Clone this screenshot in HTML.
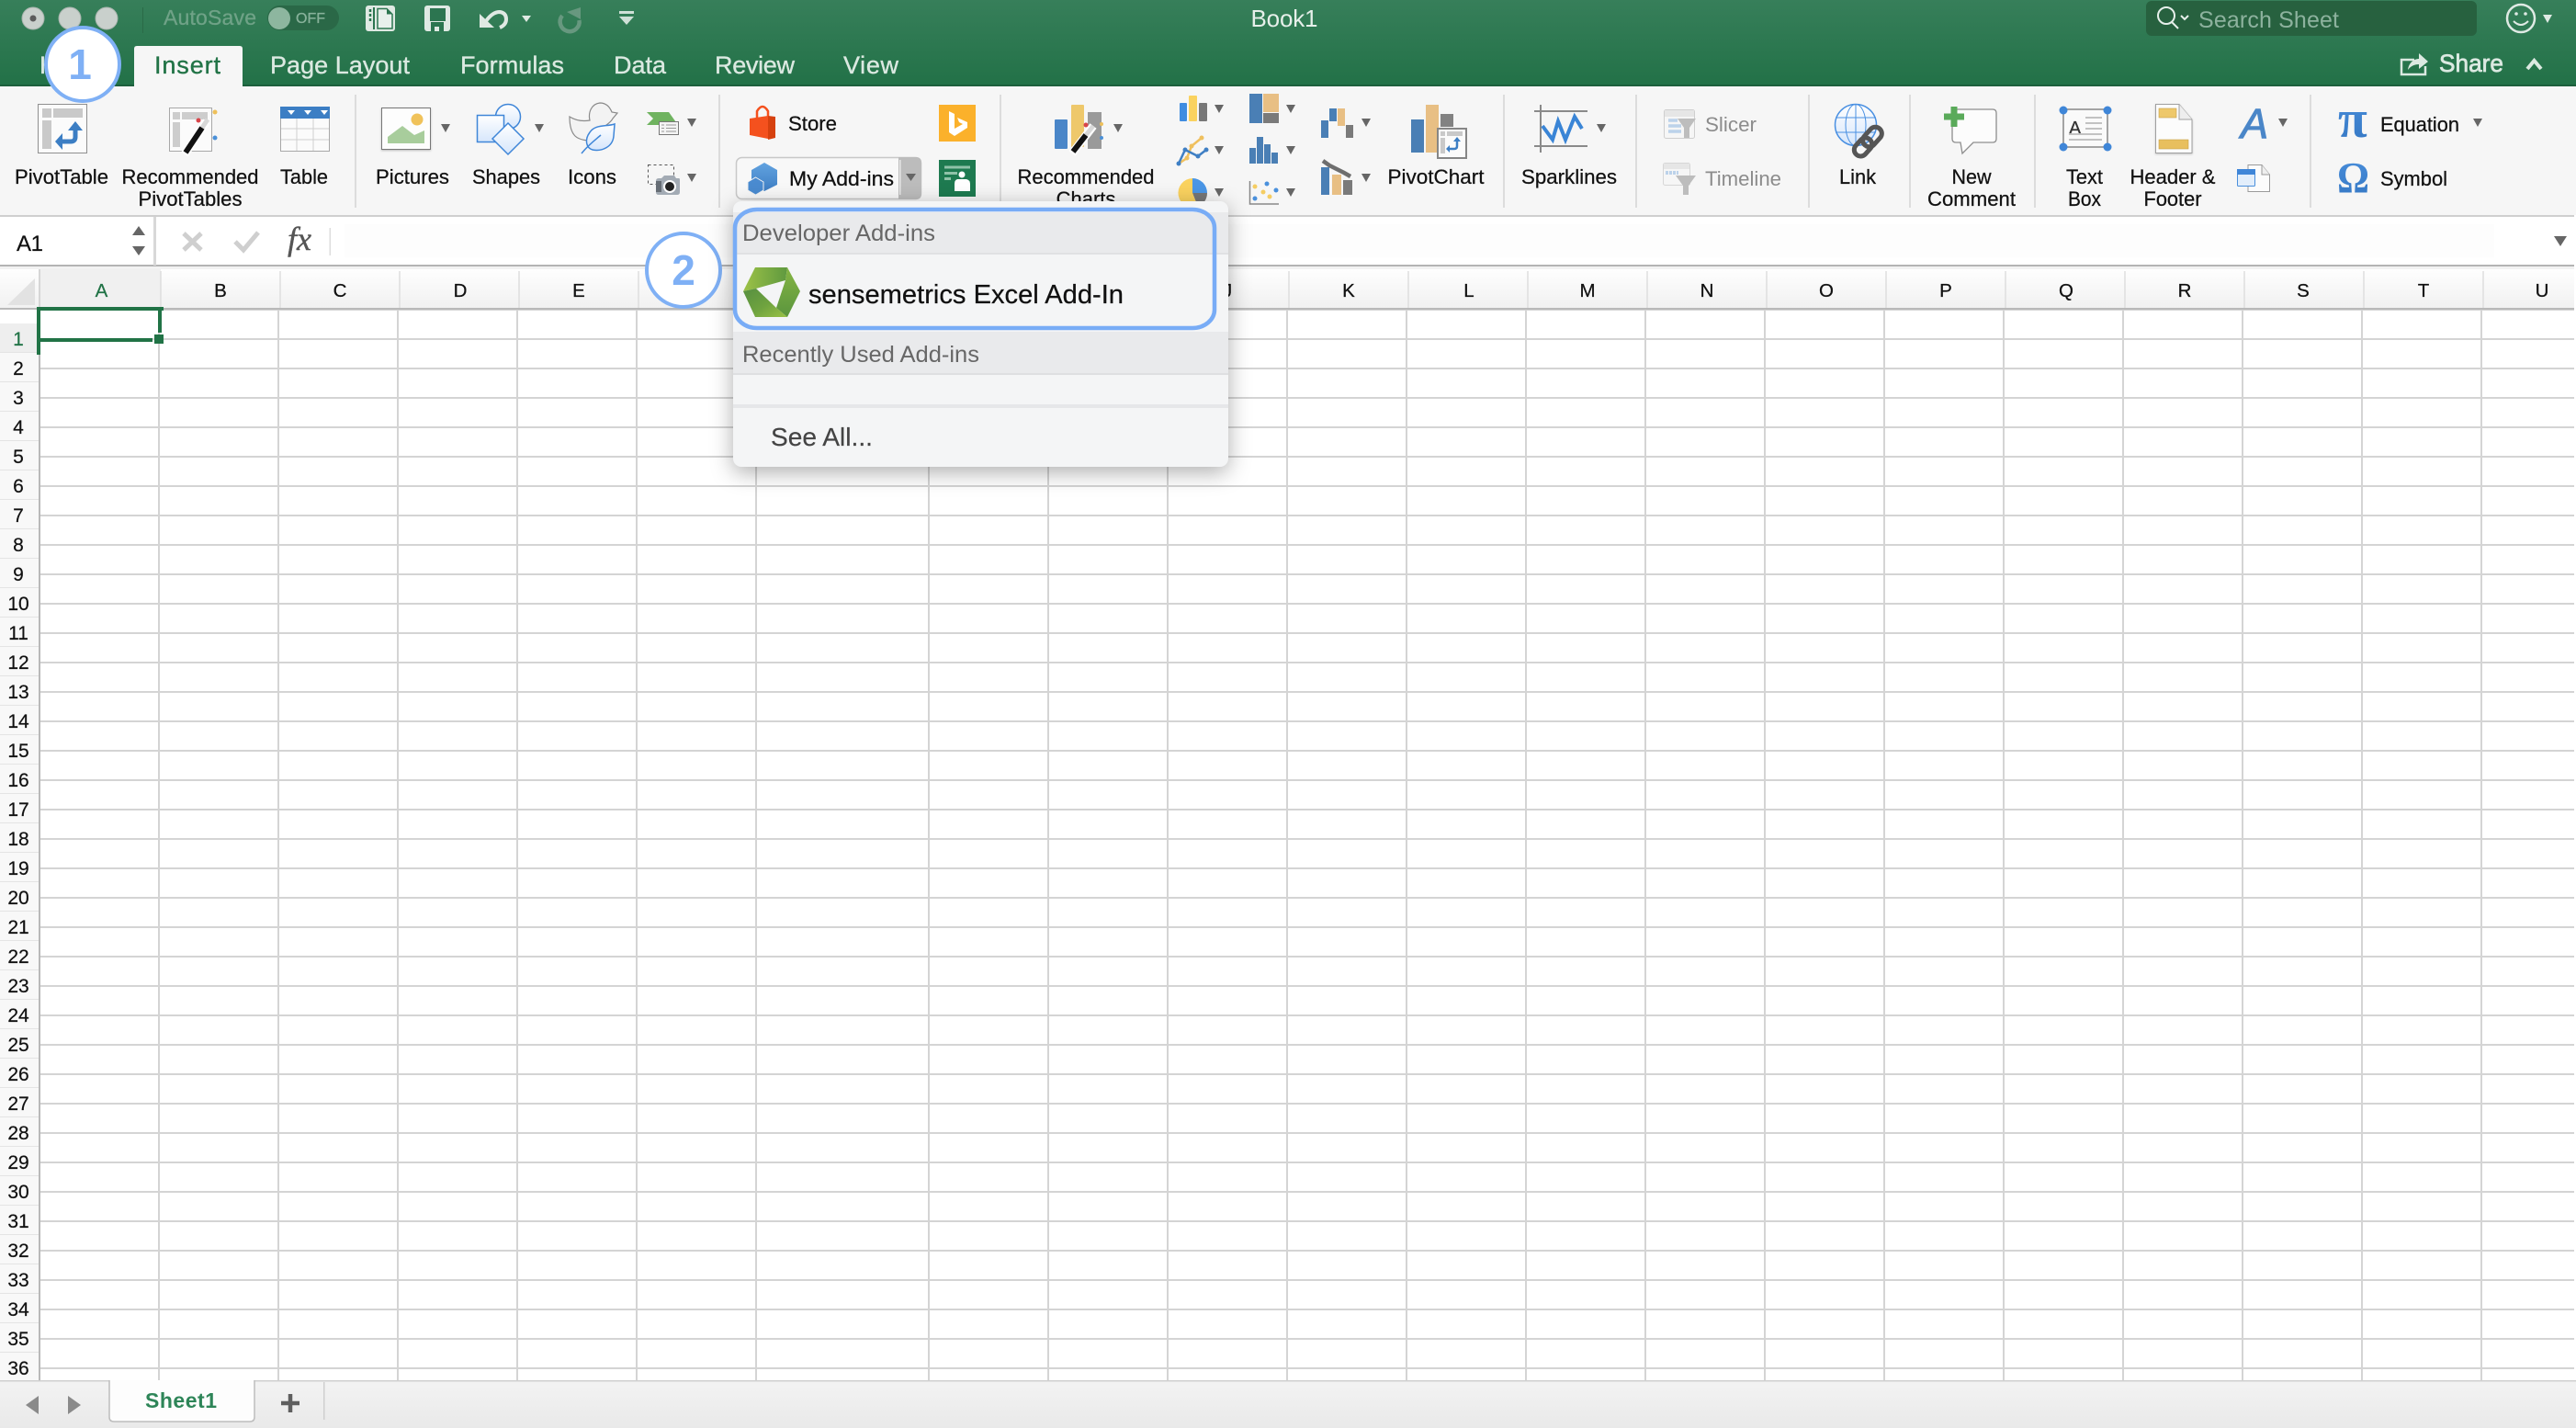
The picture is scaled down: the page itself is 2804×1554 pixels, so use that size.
<!DOCTYPE html>
<html lang="en"><head><meta charset="utf-8"><title>Book1 - Excel</title>
<style>
html,body{margin:0;padding:0;background:#fff;width:2804px;height:1554px;overflow:hidden}
svg{display:block;position:absolute;left:0;top:0}
text{font-family:"Liberation Sans",sans-serif}
.l{font-size:22px;fill:#111;stroke:#111;stroke-width:.25;text-anchor:middle}
.s{font-size:22px;fill:#111;stroke:#111;stroke-width:.25}
.t{font-size:27px;fill:#dbe9e1;stroke:#dbe9e1;stroke-width:.35}
.c{font-size:20.5px;fill:#111;stroke:#111;stroke-width:.25;text-anchor:middle}
.r{font-size:21px;fill:#111;stroke:#111;stroke-width:.2;text-anchor:middle}
.g{font-size:22px;fill:#8c8c8c}
.h{font-size:25.4px;fill:#676767}
</style></head><body>
<svg width="2804" height="1554" viewBox="0 0 2804 1554" xmlns="http://www.w3.org/2000/svg">
<defs>
<linearGradient id="top" x1="0" y1="0" x2="0" y2="1"><stop offset="0" stop-color="#377f5a"/><stop offset="1" stop-color="#227147"/></linearGradient>
<linearGradient id="hd" x1="0" y1="0" x2="0" y2="1"><stop offset="0" stop-color="#fefefe"/><stop offset="1" stop-color="#f1f1f1"/></linearGradient>
<linearGradient id="bb" x1="0" y1="0" x2="0" y2="1"><stop offset="0" stop-color="#f3f3f3"/><stop offset="1" stop-color="#e9e9e9"/></linearGradient>
<linearGradient id="bl" x1="0" y1="0" x2="0" y2="1"><stop offset="0" stop-color="#fff"/><stop offset="1" stop-color="#d6e6fb"/></linearGradient>
<linearGradient id="pi" x1="0" y1="0" x2="0" y2="1"><stop offset="0" stop-color="#4a8fdc"/><stop offset="1" stop-color="#3476c2"/></linearGradient>
<linearGradient id="hex" x1="0" y1="0" x2="0" y2="1"><stop offset="0" stop-color="#62a3e0"/><stop offset="1" stop-color="#3f7fc4"/></linearGradient>
<linearGradient id="lt" x1="0" y1="0" x2="1" y2="0"><stop offset="0" stop-color="#9dc247"/><stop offset="1" stop-color="#5f993f"/></linearGradient>
<linearGradient id="lb" x1="0" y1="0" x2="1" y2="1"><stop offset="0" stop-color="#568f40"/><stop offset=".55" stop-color="#6fa33f"/><stop offset="1" stop-color="#9ac246"/></linearGradient>
<linearGradient id="lr" x1="0" y1="0" x2="0" y2="1"><stop offset="0" stop-color="#86b543"/><stop offset="1" stop-color="#5a953e"/></linearGradient>
<pattern id="rows" patternUnits="userSpaceOnUse" x="0" y="368" width="32" height="32"><rect width="32" height="2" fill="#d4d4d4"/></pattern>
<path id="a" d="M-5-4H5L0 5Z" fill="#666"/>
</defs>

<!-- sheet grid -->
<rect x="0" y="0" width="2804" height="1554" fill="#fff"/>
<rect x="44" y="337" width="2760" height="1165" fill="url(#rows)"/>
<path d="M173 337V1502M303 337V1502M433 337V1502M563 337V1502M693 337V1502M823 337V1502M1011 337V1502M1141 337V1502M1271 337V1502M1401 337V1502M1531 337V1502M1661 337V1502M1791 337V1502M1921 337V1502M2051 337V1502M2181 337V1502M2311 337V1502M2441 337V1502M2571 337V1502M2701 337V1502" stroke="#d4d4d4" stroke-width="2" fill="none"/>

<!-- row header -->
<rect x="0" y="337" width="42" height="1165" fill="#f8f8f8"/>
<rect x="0" y="337" width="42" height="15" fill="#fff"/>
<rect x="0" y="352" width="42" height="31" fill="#eeeeee"/>
<rect x="42" y="337" width="2" height="1165" fill="#b9b9b9"/>
<g fill="#e4e4e4">
<rect y="383" width="42" height="1"/><rect y="415" width="42" height="1"/><rect y="447" width="42" height="1"/><rect y="479" width="42" height="1"/><rect y="511" width="42" height="1"/><rect y="543" width="42" height="1"/><rect y="575" width="42" height="1"/><rect y="607" width="42" height="1"/><rect y="639" width="42" height="1"/><rect y="671" width="42" height="1"/><rect y="703" width="42" height="1"/><rect y="735" width="42" height="1"/><rect y="767" width="42" height="1"/><rect y="799" width="42" height="1"/><rect y="831" width="42" height="1"/><rect y="863" width="42" height="1"/><rect y="895" width="42" height="1"/><rect y="927" width="42" height="1"/><rect y="959" width="42" height="1"/><rect y="991" width="42" height="1"/><rect y="1023" width="42" height="1"/><rect y="1055" width="42" height="1"/><rect y="1087" width="42" height="1"/><rect y="1119" width="42" height="1"/><rect y="1151" width="42" height="1"/><rect y="1183" width="42" height="1"/><rect y="1215" width="42" height="1"/><rect y="1247" width="42" height="1"/><rect y="1279" width="42" height="1"/><rect y="1311" width="42" height="1"/><rect y="1343" width="42" height="1"/><rect y="1375" width="42" height="1"/><rect y="1407" width="42" height="1"/><rect y="1439" width="42" height="1"/><rect y="1471" width="42" height="1"/>
</g>
<text class="r" x="20" y="376" style="fill:#217346;stroke:#217346">1</text><text class="r" x="20" y="408">2</text><text class="r" x="20" y="440">3</text><text class="r" x="20" y="472">4</text><text class="r" x="20" y="504">5</text><text class="r" x="20" y="536">6</text><text class="r" x="20" y="568">7</text><text class="r" x="20" y="600">8</text><text class="r" x="20" y="632">9</text><text class="r" x="20" y="664">10</text><text class="r" x="20" y="696">11</text><text class="r" x="20" y="728">12</text><text class="r" x="20" y="760">13</text><text class="r" x="20" y="792">14</text><text class="r" x="20" y="824">15</text><text class="r" x="20" y="856">16</text><text class="r" x="20" y="888">17</text><text class="r" x="20" y="920">18</text><text class="r" x="20" y="952">19</text><text class="r" x="20" y="984">20</text><text class="r" x="20" y="1016">21</text><text class="r" x="20" y="1048">22</text><text class="r" x="20" y="1080">23</text><text class="r" x="20" y="1112">24</text><text class="r" x="20" y="1144">25</text><text class="r" x="20" y="1176">26</text><text class="r" x="20" y="1208">27</text><text class="r" x="20" y="1240">28</text><text class="r" x="20" y="1272">29</text><text class="r" x="20" y="1304">30</text><text class="r" x="20" y="1336">31</text><text class="r" x="20" y="1368">32</text><text class="r" x="20" y="1400">33</text><text class="r" x="20" y="1432">34</text><text class="r" x="20" y="1464">35</text><text class="r" x="20" y="1496">36</text>

<!-- column header -->
<rect x="0" y="293" width="2804" height="42" fill="url(#hd)"/>
<rect x="44" y="293" width="131" height="42" fill="#f0f0f0"/>
<rect x="0" y="335" width="2804" height="2" fill="#b9b9b9"/>
<path d="M38 303V332H8Z" fill="#e2e2e2"/>
<rect x="42" y="293" width="2" height="42" fill="#d6d6d6"/>
<path d="M175 295V335M305 295V335M435 295V335M565 295V335M695 295V335M825 295V335M1013 295V335M1143 295V335M1273 295V335M1403 295V335M1533 295V335M1663 295V335M1793 295V335M1923 295V335M2053 295V335M2183 295V335M2313 295V335M2443 295V335M2573 295V335M2703 295V335" stroke="#dedede" stroke-width="1.5" fill="none"/>
<text class="c" x="110.500" y="323" style="fill:#217346;stroke:#217346">A</text><text class="c" x="240" y="323">B</text><text class="c" x="370" y="323">C</text><text class="c" x="501" y="323">D</text><text class="c" x="630" y="323">E</text><text class="c" x="757" y="323">F</text><text class="c" x="917" y="323">G</text><text class="c" x="1076" y="323">H</text><text class="c" x="1206" y="323">I</text><text class="c" x="1336" y="323">J</text><text class="c" x="1468" y="323">K</text><text class="c" x="1599" y="323">L</text><text class="c" x="1728" y="323">M</text><text class="c" x="1858" y="323">N</text><text class="c" x="1988" y="323">O</text><text class="c" x="2118" y="323">P</text><text class="c" x="2249" y="323">Q</text><text class="c" x="2378" y="323">R</text><text class="c" x="2507" y="323">S</text><text class="c" x="2638" y="323">T</text><text class="c" x="2767" y="323">U</text>

<!-- selection -->
<g fill="#217346">
<rect x="44" y="334" width="134" height="4"/><rect x="40" y="334" width="4" height="52"/><rect x="172" y="336" width="4" height="26"/><rect x="44" y="368" width="122" height="4"/><rect x="168" y="364" width="10" height="10"/>
</g>

<!-- formula bar -->
<rect x="0" y="236" width="2804" height="53" fill="#fff"/>
<rect x="375" y="244" width="2340" height="36" fill="#fdfdfd"/>
<rect x="0" y="234" width="2804" height="2" fill="#cfcfcf"/>
<rect x="0" y="288" width="2804" height="2" fill="#b4b4b4"/>
<rect x="0" y="290" width="2804" height="3" fill="#f2f2f2"/>
<rect x="167" y="236" width="3" height="53" fill="#d8d8d8"/>
<text x="18" y="273" textLength="29" style="font-size:24px;fill:#111;stroke:#111;stroke-width:.25">A1</text>
<path d="M151 246L158 256H144ZM151 278L144 268H158Z" fill="#666"/>
<path d="M200 254L219 272M219 254L200 272" stroke="#cfcfcf" stroke-width="5" fill="none"/>
<path d="M256 263L265 272L281 253" stroke="#cfcfcf" stroke-width="5" fill="none"/>
<text x="313" y="272" style="font-family:'Liberation Serif',serif;font-style:italic;font-size:36px;fill:#555;stroke:#555;stroke-width:.4">fx</text>
<rect x="358.500" y="248" width="1.500" height="30" fill="#ddd"/>
<path d="M2780 257H2794L2787 268Z" fill="#666"/>
<rect x="2802" y="0" width="2" height="1554" fill="#fff"/>

<!-- bottom bar -->
<rect x="0" y="1502" width="2804" height="52" fill="url(#bb)"/>
<rect x="0" y="1502" width="119" height="1.500" fill="#cfcfcf"/><rect x="277" y="1502" width="2527" height="1.500" fill="#cfcfcf"/>
<path d="M42 1519V1539L28 1529ZM74 1519V1539L88 1529Z" fill="#8a8a8a"/>
<path d="M119 1502V1542Q119 1547 124 1547H272Q277 1547 277 1542V1502" fill="#fdfdfd" stroke="#bdbdbd" stroke-width="1.500"/>
<text x="197" y="1532" text-anchor="middle" textLength="78" style="font-size:23px;font-weight:bold;fill:#2e8558">Sheet1</text>
<path d="M316 1517V1537M306 1527H326" stroke="#5f5f5f" stroke-width="4.500" fill="none"/>
<rect x="352" y="1504" width="1.500" height="41" fill="#cfcfcf"/>

<!-- ribbon -->
<rect x="0" y="94" width="2804" height="140" fill="#f6f6f6"/>
<path d="M387 103V226M783 103V226M1089 103V226M1637 103V226M1781 103V226M1969 103V226M2079 103V226M2215 103V226M2515 103V226" stroke="#dcdcdc" stroke-width="2" fill="none"/>

<!-- title bar -->
<rect x="0" y="0" width="2804" height="94" fill="url(#top)"/>
<rect x="0" y="92" width="2804" height="2" fill="#1d5f3c"/>
<circle cx="36" cy="20" r="12" fill="#c9d0cc" stroke="#a9b4ae"/><circle cx="36" cy="20" r="3.500" fill="#5c5c5c"/>
<circle cx="76" cy="20" r="12" fill="#c9d0cc" stroke="#a9b4ae"/><circle cx="116" cy="20" r="12" fill="#c9d0cc" stroke="#a9b4ae"/>
<rect x="155" y="8" width="1" height="28" fill="#2a6a47"/>
<text x="178" y="27" textLength="101" style="font-size:23px;fill:#6fa287;stroke:#6fa287;stroke-width:.3">AutoSave</text>
<rect x="291" y="6" width="78" height="27" rx="13.500" fill="#2a6847"/>
<circle cx="304" cy="20" r="12" fill="#8db69f"/>
<text x="322" y="25" textLength="32" lengthAdjust="spacingAndGlyphs" style="font-size:16px;fill:#88b29b;stroke:#88b29b;stroke-width:.3">OFF</text>
<!-- sidebar/new -->
<rect x="398" y="6" width="32" height="28" rx="3" fill="#dfe9e3"/>
<rect x="406" y="8" width="2" height="24" fill="#2c7550"/>
<path d="M403 10V13M403 15V18M403 20V23" stroke="#2c7550" stroke-width="2.500"/>
<path d="M411 9.500H421L427 15.500V31H411Z" fill="#e8f0ec" stroke="#2c7550" stroke-width="1.500"/><path d="M421 9.500V15.500H427" fill="#2c7550"/>
<!-- save -->
<rect x="462" y="6" width="28" height="28" rx="3" fill="#dfe9e3"/><rect x="468" y="9" width="17" height="14" fill="#2c7550"/><path d="M469 34V24H483V34H478V29H473V34Z" fill="#2c7550"/>
<!-- undo -->
<path d="M522 15V30H538Z" fill="#dfe9e3"/><path d="M529 23Q536 13 544 13Q551 14 551 21Q551 27 544 30" stroke="#dfe9e3" stroke-width="4" fill="none"/>
<path d="M568 17H578L573 24Z" fill="#dfe9e3"/>
<!-- redo -->
<path d="M612 17A10.500 10.500 0 1 0 630.500 22" stroke="#67987f" stroke-width="4.500" fill="none"/><path d="M617 13L632 8V21Z" fill="#67987f"/>
<!-- customize -->
<rect x="674" y="12" width="16" height="3" fill="#cfe0d7"/><path d="M674 18H690L682 27Z" fill="#cfe0d7"/>
<text x="1398" y="29" text-anchor="middle" textLength="73" style="font-size:26px;fill:#e6efea">Book1</text>
<!-- search -->
<rect x="2336" y="1" width="360" height="38" rx="6" fill="#27613f"/>
<circle cx="2358" cy="17" r="9" fill="none" stroke="#e6efea" stroke-width="2"/><path d="M2364 24L2371 31M2374 17L2378 21L2382 17" stroke="#e6efea" stroke-width="2" fill="none"/>
<text x="2393" y="30" textLength="153" style="font-size:25px;fill:#8db29e">Search Sheet</text>
<circle cx="2744" cy="20" r="15" fill="none" stroke="#dfeae4" stroke-width="2.500"/><circle cx="2739" cy="15" r="1.800" fill="#dfeae4"/><circle cx="2749" cy="15" r="1.800" fill="#dfeae4"/><path d="M2736 23Q2744 31 2752 23" fill="none" stroke="#dfeae4" stroke-width="2"/>
<path d="M2768 16H2778L2773 25Z" fill="#dfeae4"/>

<!-- tabs -->
<text class="t" x="43" y="80">H</text>
<path d="M146 94V53Q146 50 149 50H261Q264 50 264 53V94Z" fill="#f6f6f6"/>
<text x="168" y="80" style="font-size:27px;fill:#217346;stroke:#217346;stroke-width:.35" textLength="72">Insert</text>
<text class="t" x="294" y="80" textLength="152">Page Layout</text><text class="t" x="501" y="80" textLength="113">Formulas</text><text class="t" x="668" y="80" textLength="57">Data</text><text class="t" x="778" y="80" textLength="87">Review</text><text class="t" x="918" y="80" textLength="60">View</text>
<path d="M2628 65H2614V81H2640V72" fill="none" stroke="#dbe9e1" stroke-width="2.500"/><path d="M2621 76C2622 68 2628 64 2633 64V58L2643 67L2633 75V70C2628 70 2624 72 2621 76Z" fill="#dbe9e1"/>
<text x="2655" y="78" style="font-size:27px;fill:#dbe9e1;stroke:#dbe9e1;stroke-width:.7" textLength="70" lengthAdjust="spacingAndGlyphs">Share</text>
<path d="M2751 75L2758.500 66L2766 75" fill="none" stroke="#dbe9e1" stroke-width="4"/>

<!-- ribbon labels -->
<text class="l" x="67" y="200" textLength="102" lengthAdjust="spacingAndGlyphs">PivotTable</text>
<text class="l" x="207" y="200" textLength="149" lengthAdjust="spacingAndGlyphs">Recommended</text><text class="l" x="207" y="224" textLength="113" lengthAdjust="spacingAndGlyphs">PivotTables</text>
<text class="l" x="331" y="200" textLength="52" lengthAdjust="spacingAndGlyphs">Table</text><text class="l" x="449" y="200" textLength="80" lengthAdjust="spacingAndGlyphs">Pictures</text><text class="l" x="551" y="200" textLength="74" lengthAdjust="spacingAndGlyphs">Shapes</text><text class="l" x="644.500" y="200" textLength="53" lengthAdjust="spacingAndGlyphs">Icons</text>
<text class="l" x="1182" y="200" textLength="149" lengthAdjust="spacingAndGlyphs">Recommended</text><text class="l" x="1182" y="224">Charts</text>
<text class="l" x="1563" y="200" textLength="105" lengthAdjust="spacingAndGlyphs">PivotChart</text><text class="l" x="1708" y="200" textLength="104" lengthAdjust="spacingAndGlyphs">Sparklines</text>
<text class="g" x="1856" y="143" textLength="56" lengthAdjust="spacingAndGlyphs">Slicer</text><text class="g" x="1856" y="202" textLength="83" lengthAdjust="spacingAndGlyphs">Timeline</text>
<text class="l" x="2022" y="200" textLength="40" lengthAdjust="spacingAndGlyphs">Link</text>
<text class="l" x="2146" y="200" textLength="43" lengthAdjust="spacingAndGlyphs">New</text><text class="l" x="2146" y="224" textLength="96" lengthAdjust="spacingAndGlyphs">Comment</text>
<text class="l" x="2269" y="200" textLength="40" lengthAdjust="spacingAndGlyphs">Text</text><text class="l" x="2269" y="224" textLength="36" lengthAdjust="spacingAndGlyphs">Box</text>
<text class="l" x="2365" y="200" textLength="93" lengthAdjust="spacingAndGlyphs">Header &amp;</text><text class="l" x="2365" y="224" textLength="63" lengthAdjust="spacingAndGlyphs">Footer</text>
<text class="s" x="858" y="142" textLength="53" lengthAdjust="spacingAndGlyphs">Store</text>
<text class="s" x="2591" y="143" textLength="86" lengthAdjust="spacingAndGlyphs">Equation</text><text class="s" x="2591" y="202" textLength="73" lengthAdjust="spacingAndGlyphs">Symbol</text>

<!-- PivotTable icon -->
<rect x="41.500" y="113.500" width="53" height="53" fill="#fbfbfb" stroke="#8f8f8f"/>
<path d="M46 118H56V128H46ZM58 118H90V128H58ZM46 131H56V162H46Z" fill="#c9c9c9"/>
<path d="M82 142V149Q82 154 77 154H66" fill="none" stroke="#3c7ec4" stroke-width="5"/><path d="M74 142H90L82 132ZM68 145V163L60 154Z" fill="#3c7ec4"/>
<!-- Recommended PivotTables -->
<rect x="184.500" y="117.500" width="46" height="47" fill="#fbfbfb" stroke="#a8a8a8"/>
<path d="M188 122H196V130H188ZM198 122H226V130H198ZM188 133H196V160H188Z" fill="#cdcdcd"/>
<path d="M201 168L225 132" stroke="#fff" stroke-width="9"/><path d="M202 166L220 139" stroke="#111" stroke-width="6"/><path d="M220 139L226 130" stroke="#d8d8d8" stroke-width="5"/>
<circle cx="216" cy="131" r="2.500" fill="#d8454a"/><circle cx="234" cy="122" r="2.500" fill="#eec05a"/><circle cx="234" cy="150" r="2.500" fill="#4a90d8"/>
<!-- Table -->
<rect x="305.500" y="116.500" width="53" height="48" fill="#fbfbfb" stroke="#a8a8a8"/>
<path d="M323 128V164M341 128V164M306 140H358M306 152H358" stroke="#cfcfcf" fill="none"/>
<rect x="305" y="116" width="54" height="13" fill="#3c7ec4"/><path d="M313 120H321L317 125ZM331 120H339L335 125ZM349 120H357L353 125Z" fill="#fff"/>
<!-- Pictures -->
<rect x="415.500" y="117.500" width="53" height="45" fill="#fdfdfd" stroke="#777" style="filter:drop-shadow(0 1px 1px rgba(0,0,0,.25))"/>
<path d="M422 156V149L438 137L451 147L462 142V156Z" fill="#a8cd9c"/><circle cx="454" cy="130" r="6.500" fill="#f0c25a"/>
<use href="#a" x="485" y="139"/>
<!-- Shapes -->
<circle cx="553" cy="127" r="13.500" fill="url(#bl)" stroke="#3f86d8" stroke-width="1.500"/>
<rect x="519.500" y="125.500" width="29" height="29" fill="url(#bl)" stroke="#3f86d8" stroke-width="1.500"/>
<path d="M553 134L570 151L553 168L536 151Z" fill="url(#bl)" stroke="#3f86d8" stroke-width="1.500"/>
<use href="#a" x="587" y="139"/>
<!-- Icons duck & leaf -->
<path d="M620 127C628 132 636 132 642 131C640 122 644 113 653 112C660 112 664 117 666 122L672 123L667 129C664 135 656 137 655 142L650 153C640 154 630 152 626 148C621 143 620 135 620 127Z" fill="#f3f3f3" stroke="#8a8a8a" stroke-width="1.200"/>
<path d="M669 135C660 138 648 135 642 144C636 152 638 161 645 163C655 165 667 160 668 148Z" fill="url(#bl)" stroke="#3f86d8" stroke-width="1.500"/>
<path d="M633 167C640 158 647 153 654 147" stroke="#3f86d8" stroke-width="1.500" fill="none"/>
<!-- Store add-in flag -->
<path d="M704 122H728L738 136H704L711 129Z" fill="#6fb35f"/>
<rect x="717.500" y="132.500" width="21" height="14" fill="#f4f4f4" stroke="#777"/><path d="M720 136H723M725 136H736M720 139.500H723M725 139.500H736M720 143H723M725 143H736" stroke="#999"/>
<use href="#a" x="753" y="133"/>
<!-- camera -->
<rect x="705.500" y="179.500" width="28" height="21" fill="none" stroke="#555" stroke-dasharray="3 3"/>
<path d="M717 194H720L723 191H734L736 194H739Q740 194 740 196V209Q740 212 737 212H717Q714 212 714 209V197Q714 194 717 194Z" fill="#a3abb4"/><rect x="714" y="197" width="6" height="12" fill="#666d75"/>
<circle cx="729" cy="203" r="7" fill="#fff"/><circle cx="729" cy="203" r="5" fill="#222"/>
<use href="#a" x="753" y="193"/>
<!-- Store bag -->
<path d="M824 128V121Q830 111 836 121V128" fill="none" stroke="#f4511e" stroke-width="2.500"/>
<path d="M816 129L836 126L836 151L816 147Z" fill="#f4511e"/><path d="M836 126L844 127V150L836 152Z" fill="#d6410f"/>
<!-- Bing -->
<rect x="1022" y="114" width="40" height="40" fill="#fbb12b"/>
<path d="M1033 121L1039 124V140L1048 135L1044 133L1042 128L1053 133V139L1039 148L1033 144Z" fill="#fff"/>
<!-- My Add-ins button -->
<rect x="801.500" y="171.500" width="201" height="45" rx="6" fill="#f8f8f8" stroke="#c8c8c8" stroke-width="1.500"/>
<path d="M978 171H997Q1003 171 1003 177V211Q1003 217 997 217H978Z" fill="#bcbcbc"/>
<rect x="979" y="174" width="1.500" height="38" fill="#e8e8e8"/>
<path d="M986 189H997L991.500 197Z" fill="#666"/>
<path d="M832 177L846 185V201L832 208L818 201V185Z" fill="url(#hex)"/>
<path d="M822.500 193L831 198V207L822.500 212L814 207V198Z" fill="#4a8bd0" stroke="#f2f2f2" stroke-width="1"/>
<text class="s" x="859" y="202" textLength="114" lengthAdjust="spacingAndGlyphs">My Add-ins</text>
<!-- People -->
<rect x="1022" y="174" width="40" height="40" fill="#1e7a50"/>
<path d="M1028 182H1056M1028 188.500H1042M1028 194.500H1035" stroke="#8fc2a8" stroke-width="3" fill="none"/>
<circle cx="1047" cy="190" r="3.500" fill="#fff"/><path d="M1042 195H1052Q1056 196 1056 200V208H1039V200Q1039 196 1042 195Z" fill="#fff"/>
<!-- Recommended Charts -->
<rect x="1148" y="130" width="14" height="32" rx="1" fill="#4a86c8"/><rect x="1166" y="114" width="14" height="46" rx="1" fill="#eec86b"/><rect x="1184" y="122" width="15" height="40" fill="#9a9a9a"/>
<path d="M1167 167L1190 137" stroke="#fff" stroke-width="9"/><path d="M1168 165L1182 147" stroke="#111" stroke-width="6"/><path d="M1182 147L1190 137" stroke="#d8d8d8" stroke-width="5"/>
<circle cx="1182" cy="136" r="2.500" fill="#d8454a"/><circle cx="1199" cy="135" r="2" fill="#eec05a"/><circle cx="1199" cy="150" r="2" fill="#4a90d8"/>
<use href="#a" x="1217" y="139"/>
<!-- small charts col 1 -->
<rect x="1284" y="112" width="8" height="20" rx="1" fill="#3f8ce0"/><rect x="1294" y="104" width="9" height="28" rx="1" fill="#fad25f"/><rect x="1305" y="112" width="9" height="20" rx="1" fill="#777"/>
<use href="#a" x="1327" y="118"/>
<path d="M1283 178L1292 172L1297 159L1308 150" stroke="#efc05e" stroke-width="2.500" fill="none"/><path d="M1283 178L1290 163L1304 170L1313 163" stroke="#3f7fc4" stroke-width="2.500" fill="none"/>
<circle cx="1292" cy="172" r="2.500" fill="#efc05e"/><circle cx="1297" cy="159" r="2.500" fill="#efc05e"/><circle cx="1308" cy="150" r="2.500" fill="#efc05e"/>
<circle cx="1283" cy="178" r="2.500" fill="#3f7fc4"/><circle cx="1290" cy="163" r="2.500" fill="#3f7fc4"/><circle cx="1304" cy="170" r="2.500" fill="#3f7fc4"/><circle cx="1313" cy="163" r="2.500" fill="#3f7fc4"/>
<use href="#a" x="1327" y="163"/>
<path d="M1298 210V194A16 16 0 0 1 1314 210Z" fill="#4a96e6"/><path d="M1298 210H1314A16 16 0 0 1 1304 225Z" fill="#777"/><path d="M1298 210L1304 225A16 16 0 1 1 1298 194Z" fill="#fad25f"/>
<use href="#a" x="1327" y="209"/>
<!-- small charts col 2 -->
<rect x="1360" y="102" width="14" height="32" fill="#4a7fb5"/><rect x="1375" y="102" width="17" height="20" fill="#e8bf84"/><rect x="1375" y="123" width="17" height="11" fill="#7a7a7a"/>
<use href="#a" x="1405" y="118"/>
<path d="M1360 161H1367V178H1360ZM1368 149H1375V178H1368ZM1376 157H1383V178H1376ZM1384 166H1391V178H1384Z" fill="#4a7fb5"/>
<use href="#a" x="1405" y="163"/>
<path d="M1360.500 197V222H1392" fill="none" stroke="#888" stroke-width="1.500"/>
<circle cx="1366" cy="203" r="2.500" fill="#f5cd62"/><circle cx="1379" cy="200" r="2.500" fill="#4a90dc"/><circle cx="1375" cy="209" r="2.500" fill="#f5cd62"/><circle cx="1389" cy="207" r="2.500" fill="#4a90dc"/><circle cx="1382" cy="214" r="2.500" fill="#f5cd62"/><circle cx="1366" cy="216" r="2.500" fill="#4a90dc"/>
<use href="#a" x="1405" y="209"/>
<!-- col 3 -->
<rect x="1438" y="131" width="8" height="19" fill="#4a7fb5"/><rect x="1447" y="118" width="8" height="14" fill="#4a7fb5"/><rect x="1456" y="118" width="8" height="19" fill="#e8bf84"/><rect x="1465" y="136" width="8" height="14" fill="#7a7a7a"/>
<use href="#a" x="1487" y="133"/>
<path d="M1440 175L1447 180L1455 184L1463 188L1470 192" stroke="#6e6e6e" stroke-width="4.500" fill="none"/>
<rect x="1438" y="182" width="9" height="30" fill="#4a7fb5"/><rect x="1450" y="190" width="10" height="22" fill="#e8bf84"/><rect x="1462" y="196" width="10" height="16" fill="#7a7a7a"/>
<use href="#a" x="1487" y="193"/>
<!-- PivotChart -->
<rect x="1536" y="130" width="14" height="36" fill="#4a7fb5"/><rect x="1552" y="114" width="14" height="52" fill="#e8bf84"/><rect x="1568" y="124" width="14" height="14" fill="#828282"/>
<rect x="1565" y="140" width="31" height="32" fill="#fbfbfb" stroke="#868686" stroke-width="2"/>
<path d="M1568 143H1573V148H1568ZM1575 143H1592V148H1575ZM1568 150H1573V167H1568Z" fill="#c9c9c9"/>
<path d="M1586 153V159Q1586 162 1583 162H1577" fill="none" stroke="#3c7ec4" stroke-width="2.500"/><path d="M1582 154H1590L1586 149ZM1578 158V166L1574 162Z" fill="#3c7ec4"/>
<!-- Sparklines -->
<path d="M1677 114V166M1670 121H1728M1670 159H1728" stroke="#8a8a8a" stroke-width="2" fill="none"/>
<path d="M1679 137L1690 152L1696 132L1704 152L1714 127L1722 140" stroke="#3a85d6" stroke-width="4" fill="none"/>
<use href="#a" x="1743" y="139"/>
<!-- Slicer -->
<rect x="1811.500" y="119.500" width="33" height="31" rx="2" fill="#f6f6f6" stroke="#cfcfcf"/><rect x="1812" y="120" width="32" height="7" fill="#e6e6e6"/>
<path d="M1816 131H1826M1816 137H1830M1816 143H1830" stroke="#bcd2ea" stroke-width="3.500"/>
<path d="M1826 129H1846L1839 139V150H1833V139Z" fill="#bdbdbd"/>
<!-- Timeline -->
<rect x="1810.500" y="177.500" width="29" height="24" rx="2" fill="#f6f6f6" stroke="#d6d6d6"/><rect x="1811" y="178" width="28" height="6" fill="#e6e6e6"/>
<path d="M1813 188H1827" stroke="#bcd2ea" stroke-width="4" stroke-dasharray="3 1"/>
<path d="M1824 191H1846L1838 202V212H1832V202Z" fill="#bdbdbd"/>
<!-- Link -->
<circle cx="2020" cy="136" r="22.500" fill="url(#bl)" stroke="#4a90e2" stroke-width="1.500"/>
<path d="M2020 113V159M1998 128H2042M1998 144H2042" stroke="#4a90e2" fill="none"/><ellipse cx="2020" cy="136" rx="11" ry="22.500" fill="none" stroke="#4a90e2"/>
<g fill="none" stroke="#555" stroke-width="5"><rect x="2031" y="137" width="14" height="24" rx="7" transform="rotate(42 2038 149)"/><rect x="2021" y="149" width="14" height="22" rx="7" transform="rotate(42 2028 160)"/></g>
<!-- New Comment -->
<path d="M2129 119H2169Q2173 119 2173 123V151Q2173 155 2169 155H2148L2136 167L2134 155H2129Q2125 155 2125 151V123Q2125 119 2129 119Z" fill="#fcfcfc" stroke="#8e8e8e" stroke-width="1.300"/>
<path d="M2127 116V138M2116 127H2138" stroke="#5aaa5a" stroke-width="7" fill="none"/>
<!-- Text Box -->
<rect x="2246" y="119" width="48" height="41" fill="#fafafa" stroke="#888" stroke-width="1.500"/>
<text x="2252" y="146" style="font-size:20px;fill:#333;stroke:#333;stroke-width:.3">A</text>
<path d="M2270 128H2288M2270 134H2288M2270 140H2288M2252 146H2288M2252 152H2288" stroke="#c2c2c2" stroke-width="2"/>
<circle cx="2246" cy="120" r="4.500" fill="#3f86d8"/><circle cx="2294" cy="120" r="4.500" fill="#3f86d8"/><circle cx="2246" cy="160" r="4.500" fill="#3f86d8"/><circle cx="2294" cy="160" r="4.500" fill="#3f86d8"/>
<!-- Header & Footer -->
<path d="M2346.500 113.500H2372L2386 130V166.500H2346.500Z" fill="#fcfcfc" stroke="#a0a0a0" style="filter:drop-shadow(0 1px 1px rgba(0,0,0,.2))"/><path d="M2372 113.500V130H2386" fill="#eee" stroke="#a0a0a0"/>
<rect x="2350" y="118" width="19" height="10" fill="#eec86b" stroke="#c9a04a" stroke-width=".6"/><rect x="2350" y="152" width="32" height="10" fill="#e8bf5e" stroke="#c9a04a" stroke-width=".6"/>
<!-- WordArt -->
<text x="2439" y="150" style="font-style:italic;font-size:45px;fill:#4a86c8;stroke:#4a86c8;stroke-width:1">A</text>
<use href="#a" x="2485" y="133"/>
<!-- Object -->
<path d="M2447 179.500H2462L2470.500 190V208.500H2447Z" fill="#fcfcfc" stroke="#9a9a9a"/><path d="M2462 179.500V190H2470.500" fill="#eee" stroke="#9a9a9a"/>
<rect x="2435.500" y="184.500" width="19" height="18" rx="1" fill="#e2eefb" stroke="#4a8fdc"/><rect x="2435" y="184" width="20" height="6" fill="#3f86d8"/>
<!-- Pi, Omega -->
<text x="2545" y="149" style="font-family:'Liberation Serif',serif;font-weight:bold;font-size:58px;fill:url(#pi)">π</text>
<use href="#a" x="2697" y="133"/>
<text x="2544" y="209.500" textLength="35" lengthAdjust="spacingAndGlyphs" style="font-family:'Liberation Serif',serif;font-weight:bold;font-size:48px;fill:url(#pi)">Ω</text>

<!-- circle 1 -->
<circle cx="90" cy="70" r="40" fill="#fff" stroke="#7fb0f5" stroke-width="4"/>
<text x="87" y="86" text-anchor="middle" style="font-size:46px;font-weight:bold;fill:#7fb0f5">1</text>
<!-- circle 2 -->
<circle cx="744" cy="294" r="40" fill="#fff" stroke="#7fb0f5" stroke-width="4"/>
<text x="744" y="310" text-anchor="middle" style="font-size:46px;font-weight:bold;fill:#7fb0f5">2</text>

<!-- dropdown menu -->
<rect x="798" y="219" width="539" height="289" rx="9" fill="#f4f5f6" style="filter:drop-shadow(0 6px 12px rgba(0,0,0,.32))"/>
<rect x="798" y="231" width="539" height="44" fill="#e9eaec"/><rect x="798" y="275" width="539" height="2" fill="#e0e1e3"/>
<rect x="798" y="361" width="539" height="46" fill="#e9eaec"/><rect x="798" y="406" width="539" height="2" fill="#dedfe1"/>
<rect x="798" y="440" width="539" height="4" fill="#e6e7e9"/>
<text x="808" y="262" class="h" textLength="210" lengthAdjust="spacingAndGlyphs">Developer Add-ins</text>
<text x="808" y="394" class="h" textLength="258" lengthAdjust="spacingAndGlyphs">Recently Used Add-ins</text>
<text x="880" y="330" textLength="343" lengthAdjust="spacingAndGlyphs" style="font-size:29px;fill:#111;stroke:#111;stroke-width:.25">sensemetrics Excel Add-In</text>
<text x="839" y="485" textLength="111" lengthAdjust="spacingAndGlyphs" style="font-size:28px;fill:#444;stroke:#444;stroke-width:.2">See All...</text>
<!-- sensemetrics logo -->
<path d="M809 317L822 291H857L855 305L823 314Z" fill="url(#lt)"/>
<path d="M857 291L871 317L857 345L845 335L855 305Z" fill="url(#lr)"/>
<path d="M809 317L823 314L845 335L857 345H822Z" fill="url(#lb)"/>
<rect x="800" y="228" width="522" height="129" rx="24" ry="20" fill="none" stroke="#78acf6" stroke-width="4.500"/>
</svg>
</body></html>
